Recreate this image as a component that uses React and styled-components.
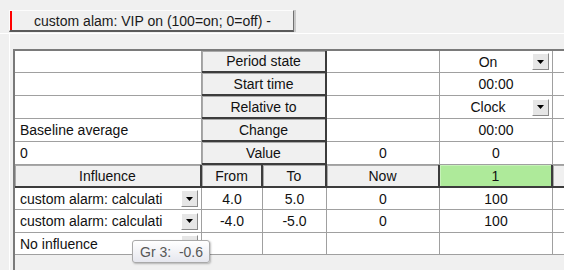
import React from 'react';
import styled, { createGlobalStyle } from 'styled-components';

const GlobalStyle = createGlobalStyle`
  html, body {
    margin: 0;
    padding: 0;
    background: #f0f0f0;
  }
  body {
    font-family: "Liberation Sans", Arial, sans-serif;
    font-size: 14px;
    color: #111;
  }
`;

const Window = styled.div`
  position: relative;
  width: 564px;
  height: 270px;
  overflow: hidden;
  background: #f0f0f0;
  display: flex;
  flex-direction: column;
`;

const TabStrip = styled.div`
  display: flex;
  padding: 10px 0 0 9px;
  height: 23px;
  border-bottom: 1px solid #fff;
`;

const Tab = styled.div`
  width: 281px;
  height: 19px;
  border-top: 1px solid #fcfcfc;
  border-left: 1px solid #fcfcfc;
  border-right: 1px solid #707070;
  border-bottom: 2px solid #5a5a5a;
  box-shadow: inset 2px 0 0 #ff0000, 2px 0 0 #c8c8c8;
  display: flex;
  align-items: center;
  justify-content: center;
  font-size: 14px;
  color: #1a1a1a;
  padding-left: 2px;
`;

const Panel = styled.div`
  flex: 1;
  margin-left: 9px;
  border-left: 1px solid #fff;
  padding: 15px 0 0 3px;
  display: flex;
  min-height: 0;
`;

const Grid = styled.div`
  flex: 1;
  display: grid;
  grid-template-columns: 187px 61px 64px 113px 113px 60px;
  grid-template-rows: 22px 23px 23px 23px 23px 23px 22px 23px 22px;
  align-content: start;
  border-left: 2px solid #7a7a7a;
  border-top: 2px solid #7a7a7a;
  background: #f0f0f0;
  overflow: hidden;
`;

const Cell = styled.div`
  box-sizing: border-box;
  background: #fff;
  border-right: 1px solid #a0a0a0;
  border-bottom: 1px solid #a0a0a0;
  display: flex;
  align-items: center;
  justify-content: ${(p) => (p.$left ? 'flex-start' : 'center')};
  padding-left: ${(p) => (p.$left ? '5px' : '0')};
  white-space: nowrap;
  overflow: hidden;
  font-size: 14px;
`;

const HeadCell = styled.div`
  box-sizing: border-box;
  background: ${(p) => (p.$active ? '#aeea9a' : '#f0f0f0')};
  border-right: 2px solid #3c3c3c;
  border-bottom: 2px solid #3c3c3c;
  box-shadow: inset 1px 1px 0 ${(p) => (p.$active ? '#c6f2b8' : '#a8a8a8')};
  display: flex;
  align-items: center;
  justify-content: center;
  grid-column: ${(p) => p.$span || 'auto'};
  white-space: nowrap;
  overflow: hidden;
  font-size: 14px;
`;

const ComboCell = styled(Cell)`
  justify-content: space-between;
  padding-right: 3px;
`;

const ComboText = styled.span`
  flex: 1;
  overflow: hidden;
  white-space: nowrap;
  text-align: ${(p) => (p.$left ? 'left' : 'center')};
  padding-left: ${(p) => (p.$left ? '0' : '8px')};
`;

const DropButton = styled.div`
  flex: none;
  width: 15px;
  height: 15px;
  margin-left: 4px;
  background: #e6e6e6;
  border-top: 1px solid #fff;
  border-left: 1px solid #fff;
  border-right: 1px solid #8a8a8a;
  border-bottom: 1px solid #8a8a8a;
  display: flex;
  align-items: center;
  justify-content: center;
`;

const Tooltip = styled.div`
  position: absolute;
  left: 132px;
  top: 240px;
  width: 69px;
  height: 21px;
  border: 1px solid #a9a9a9;
  border-radius: 3px;
  background: linear-gradient(#ffffff, #e6e7ee);
  box-shadow: 1px 1px 2px rgba(0, 0, 0, 0.25);
  color: #575757;
  font-size: 14px;
  display: flex;
  align-items: center;
  padding-left: 7px;
  white-space: pre;
`;

function Arrow() {
  return (
    <svg width="7" height="4" viewBox="0 0 7 4">
      <path d="M0 0 H7 L3.5 4 Z" fill="#000" />
    </svg>
  );
}

function Combo({ text, left }) {
  return (
    <ComboCell $left={left}>
      <ComboText $left={left}>{text}</ComboText>
      <DropButton>
        <Arrow />
      </DropButton>
    </ComboCell>
  );
}

const topRows = [
  { label: '', head: 'Period state', now: '', value: 'On', combo: true },
  { label: '', head: 'Start time', now: '', value: '00:00' },
  { label: '', head: 'Relative to', now: '', value: 'Clock', combo: true },
  { label: 'Baseline average', head: 'Change', now: '', value: '00:00' },
  { label: '0', head: 'Value', now: '0', value: '0' },
];

const influences = [
  { name: 'custom alarm: calculati', from: '4.0', to: '5.0', now: '0', value: '100' },
  { name: 'custom alarm: calculati', from: '-4.0', to: '-5.0', now: '0', value: '100' },
];

export default function App() {
  return (
    <Window>
      <GlobalStyle />
      <TabStrip>
        <Tab>custom alam: VIP on (100=on; 0=off) -</Tab>
      </TabStrip>
      <Panel>
        <Grid>
          {topRows.map((r) => (
            <React.Fragment key={r.head}>
              <Cell $left>{r.label}</Cell>
              <HeadCell $span="span 2">{r.head}</HeadCell>
              <Cell>{r.now}</Cell>
              {r.combo ? <Combo text={r.value} /> : <Cell>{r.value}</Cell>}
              <Cell />
            </React.Fragment>
          ))}

          <HeadCell>Influence</HeadCell>
          <HeadCell>From</HeadCell>
          <HeadCell>To</HeadCell>
          <HeadCell>Now</HeadCell>
          <HeadCell $active>1</HeadCell>
          <HeadCell />

          {influences.map((r, i) => (
            <React.Fragment key={i}>
              <Combo left text={r.name} />
              <Cell>{r.from}</Cell>
              <Cell>{r.to}</Cell>
              <Cell>{r.now}</Cell>
              <Cell>{r.value}</Cell>
              <Cell />
            </React.Fragment>
          ))}

          <Combo left text="No influence" />
          <Cell />
          <Cell />
          <Cell />
          <Cell />
          <Cell />
        </Grid>
      </Panel>
      <Tooltip>{'Gr 3:  -0.6'}</Tooltip>
    </Window>
  );
}
